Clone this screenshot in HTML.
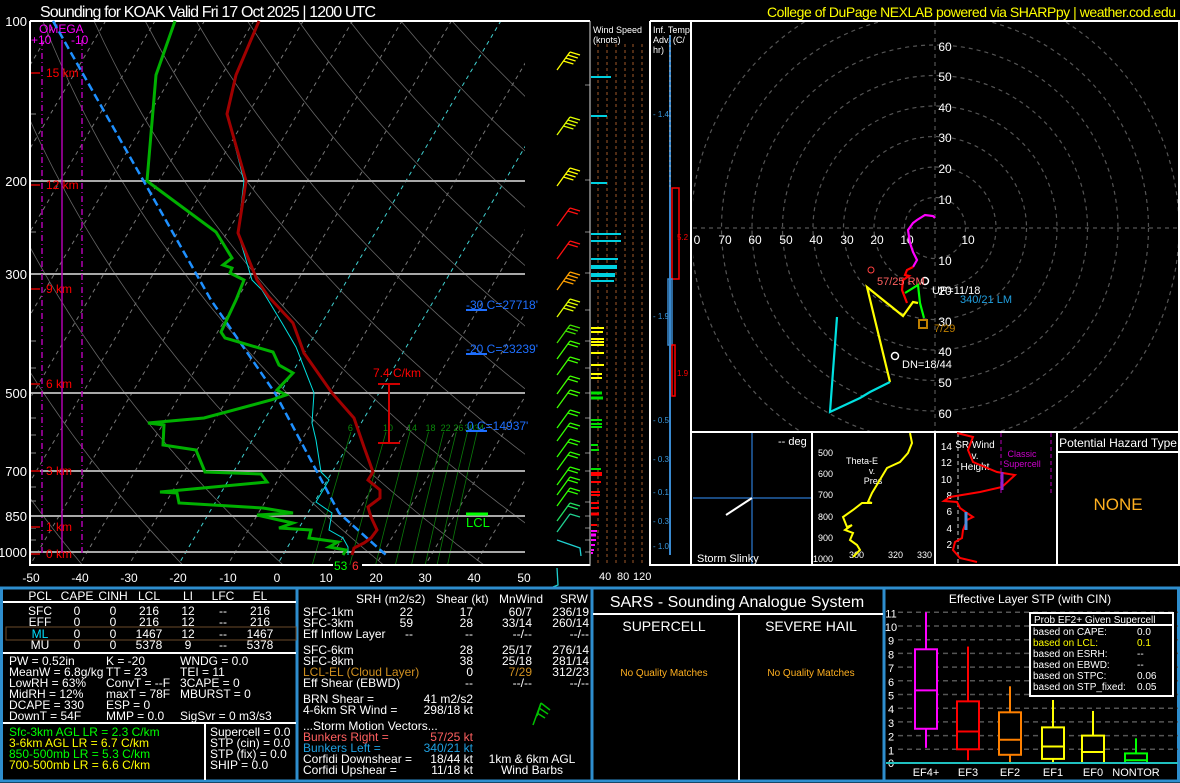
<!DOCTYPE html>
<html><head><meta charset="utf-8"><style>
html,body{margin:0;padding:0;background:#000;width:1180px;height:783px;overflow:hidden}
svg{display:block}
text{font-family:"Liberation Sans",sans-serif}
</style></head><body>
<svg id="s" width="1180" height="783" viewBox="0 0 1180 783" xmlns="http://www.w3.org/2000/svg">
<defs><clipPath id="ck"><rect x="31" y="22" width="494" height="543"/></clipPath>
<clipPath id="ch"><rect x="693" y="22" width="487" height="409"/></clipPath></defs>
<rect width="1180" height="783" fill="#000"/>
<text x="40" y="17" fill="#fff" font-size="16" textLength="336">Sounding for KOAK Valid  Fri 17 Oct 2025 | 1200 UTC</text>
<text x="1176" y="17" fill="#ffff00" font-size="14" text-anchor="end" textLength="409">College of DuPage NEXLAB powered via SHARPpy | weather.cod.edu</text>

<g id="grid" clip-path="url(#ck)"></g>
<!-- pressure lines -->
<g stroke="#a8a8a8" stroke-width="2">
<line x1="31" y1="181" x2="525" y2="181"/><line x1="31" y1="274" x2="525" y2="274"/><line x1="31" y1="393" x2="525" y2="393"/><line x1="31" y1="471" x2="525" y2="471"/><line x1="31" y1="516" x2="525" y2="516"/><line x1="31" y1="552" x2="525" y2="552"/></g>
<g stroke="#888" stroke-width="1"><line x1="31" y1="114" x2="36" y2="114"/><line x1="31" y1="232" x2="36" y2="232"/><line x1="31" y1="341" x2="36" y2="341"/><line x1="31" y1="368" x2="36" y2="368"/><line x1="31" y1="418" x2="36" y2="418"/><line x1="31" y1="435" x2="36" y2="435"/><line x1="31" y1="453" x2="36" y2="453"/><line x1="31" y1="487" x2="36" y2="487"/><line x1="31" y1="501" x2="36" y2="501"/><line x1="31" y1="528" x2="36" y2="528"/><line x1="31" y1="540" x2="36" y2="540"/></g>
<!-- omega -->
<g stroke="#b000b0" stroke-width="1.5"><line x1="62" y1="40" x2="62" y2="553"/>
<line x1="42" y1="40" x2="42" y2="553" stroke-dasharray="6,3,1,3"/><line x1="82" y1="40" x2="82" y2="553" stroke-dasharray="6,3,1,3"/></g>
<text x="39" y="33" fill="#ff00ff" font-size="12">OMEGA</text>
<text x="31" y="44" fill="#ff00ff" font-size="12">+10</text><text x="71" y="44" fill="#ff00ff" font-size="12">-10</text>
<!-- box -->
<g stroke="#fff" stroke-width="2" fill="none"><line x1="30" y1="21" x2="590" y2="21"/><line x1="30" y1="21" x2="30" y2="566"/><line x1="30" y1="565" x2="333" y2="565"/><line x1="362" y1="565" x2="590" y2="565"/></g>
<g fill="#fff" font-size="13" text-anchor="end"><text x="27" y="26">100</text><text x="27" y="186">200</text><text x="27" y="279">300</text><text x="27" y="398">500</text><text x="27" y="476">700</text><text x="27" y="521">850</text><text x="27" y="557">1000</text></g>
<g fill="#fff" font-size="12" text-anchor="middle"><text x="31" y="582">-50</text><text x="80" y="582">-40</text><text x="129" y="582">-30</text><text x="178" y="582">-20</text><text x="228" y="582">-10</text><text x="277" y="582">0</text><text x="326" y="582">10</text><text x="376" y="582">20</text><text x="425" y="582">30</text><text x="474" y="582">40</text><text x="524" y="582">50</text></g>
<text x="334" y="570" fill="#00ff00" font-size="12">53</text><text x="352" y="570" fill="#ff3030" font-size="12">6</text>
<!-- km -->
<g stroke="#a00000" stroke-width="2"><line x1="31" y1="73" x2="40" y2="73"/><line x1="31" y1="185" x2="40" y2="185"/><line x1="31" y1="289" x2="40" y2="289"/><line x1="31" y1="384" x2="40" y2="384"/><line x1="31" y1="471" x2="40" y2="471"/><line x1="31" y1="527" x2="40" y2="527"/><line x1="31" y1="554" x2="40" y2="554"/></g>
<g fill="#ff0000" font-size="12"><text x="46" y="77">15 km</text><text x="46" y="189">12 km</text><text x="46" y="293">9 km</text><text x="46" y="388">6 km</text><text x="46" y="475">3 km</text><text x="46" y="531">1 km</text><text x="46" y="558">0 km</text></g>
<!-- traces -->
<polyline fill="none" stroke="#1e90ff" stroke-width="2.5" stroke-dasharray="8,4" points="53,21 211,300 275,393 339,513 386,555"/>
<polyline fill="none" stroke="#00e0e0" stroke-width="1" points="259,21 236,75 227,114 244,181 238,233 252,280 262,290 282,323 296,347 314,393 312,423 316,440 321,472 329,480 316,502 332,513 329,530 343,538 348,547 348,555"/>
<polyline fill="none" stroke="#a00000" stroke-width="3" points="259,21 236,75 227,114 246,181 238,233 257,280 268,296 293,323 304,353 332,393 354,418 364,447 373,472 368,480 380,490 380,498 368,507 371,517 377,530 371,538 364,543 354,548 352,555"/>
<polyline fill="none" stroke="#00b000" stroke-width="3" points="175,21 156,75 147,181 216,232 232,258 223,265 232,268 230,273 244,280 236,300 221,332 225,338 273,352 279,365 293,373 277,390 286,395 271,400 204,418 148,423 164,425 163,445 196,450 205,472 261,474 267,482 160,492 177,493 179,503 263,508 293,513 257,515 279,520 293,523 279,528 311,530 309,538 338,542 329,547 346,550 343,555"/>
<g fill="#1e6fff" font-size="12"><text x="466" y="309">-30 C=27718'</text><text x="466" y="353">-20 C=23239'</text><text x="467" y="430">0 C=14937'</text></g>
<g stroke="#1e6fff" stroke-width="2"><line x1="466" y1="310" x2="487" y2="310"/><line x1="466" y1="354" x2="487" y2="354"/><line x1="466" y1="431" x2="487" y2="431"/></g>
<line x1="466" y1="514" x2="488" y2="514" stroke="#00ff00" stroke-width="3"/><text x="466" y="527" fill="#00ff00" font-size="13">LCL</text>
<text x="373" y="377" fill="#ff0000" font-size="12">7.4 C/km</text>
<g stroke="#d00000" stroke-width="2"><line x1="389" y1="384" x2="389" y2="443"/><line x1="378" y1="384" x2="400" y2="384"/><line x1="378" y1="443" x2="400" y2="443"/></g>
<g id="barbs"></g>
<g stroke="#888" stroke-width="1"><line x1="585" y1="85" x2="590" y2="85"/><line x1="585" y1="180" x2="590" y2="180"/><line x1="585" y1="232" x2="590" y2="232"/><line x1="585" y1="273" x2="590" y2="273"/><line x1="585" y1="310" x2="590" y2="310"/><line x1="585" y1="341" x2="590" y2="341"/><line x1="585" y1="368" x2="590" y2="368"/><line x1="585" y1="393" x2="590" y2="393"/><line x1="585" y1="418" x2="590" y2="418"/><line x1="585" y1="453" x2="590" y2="453"/><line x1="585" y1="471" x2="590" y2="471"/><line x1="585" y1="502" x2="590" y2="502"/><line x1="585" y1="516" x2="590" y2="516"/><line x1="585" y1="528" x2="590" y2="528"/><line x1="585" y1="540" x2="590" y2="540"/><line x1="585" y1="552" x2="590" y2="552"/></g>
<!-- wind speed panel -->
<g stroke="#6a3a1a" stroke-width="1.5" stroke-dasharray="3,3"><line x1="598" y1="44" x2="598" y2="565"/><line x1="607" y1="44" x2="607" y2="565"/><line x1="616" y1="44" x2="616" y2="565"/><line x1="625" y1="44" x2="625" y2="565"/><line x1="633" y1="44" x2="633" y2="565"/><line x1="642" y1="44" x2="642" y2="565"/></g>
<line x1="590" y1="21" x2="590" y2="566" stroke="#ddd" stroke-width="1"/>
<line x1="650" y1="21" x2="650" y2="566" stroke="#fff" stroke-width="2"/>
<line x1="691" y1="21" x2="691" y2="566" stroke="#fff" stroke-width="2"/>
<line x1="650" y1="21" x2="1180" y2="21" stroke="#fff" stroke-width="2"/>
<text x="593" y="33" fill="#fff" font-size="9">Wind Speed</text><text x="593" y="43" fill="#fff" font-size="9">(knots)</text>
<text x="653" y="33" fill="#fff" font-size="9">Inf. Temp.</text><text x="653" y="43" fill="#fff" font-size="9">Adv. (C/</text><text x="653" y="53" fill="#fff" font-size="9">hr)</text>
<g id="ws"></g>
<text x="599" y="580" fill="#fff" font-size="11">40</text><text x="617" y="580" fill="#fff" font-size="11">80</text><text x="633" y="580" fill="#fff" font-size="11">120</text>
<!-- temp adv -->
<line x1="670" y1="35" x2="670" y2="555" stroke="#3a8ad0" stroke-width="2"/>
<line x1="670" y1="35" x2="670" y2="188" stroke="#aaa" stroke-width="1" stroke-dasharray="2,3"/>
<rect x="672" y="188" width="7" height="91" fill="none" stroke="#ff0000" stroke-width="1.5"/>
<rect x="668" y="279" width="4" height="66" fill="none" stroke="#3a8ad0" stroke-width="1.5"/>
<rect x="672" y="345" width="3" height="51" fill="none" stroke="#ff0000" stroke-width="1.5"/>
<g fill="#3a9ae0" font-size="8"><text x="653" y="117">- 1.4</text><text x="653" y="319">- 1.9</text><text x="653" y="423">- 0.5</text><text x="653" y="462">- 0.3</text><text x="653" y="495">- 0.1</text><text x="653" y="524">- 0.3</text><text x="653" y="549">- 1.0</text></g>
<g fill="#ff0000" font-size="8"><text x="677" y="240">5.2</text><text x="677" y="376">1.9</text></g>
<!-- hodograph -->
<g clip-path="url(#ch)" fill="none" stroke="#555" stroke-width="1.2" stroke-dasharray="4,4">
<circle cx="935" cy="228" r="30.5"/><circle cx="935" cy="228" r="61"/><circle cx="935" cy="228" r="91.5"/><circle cx="935" cy="228" r="122"/><circle cx="935" cy="228" r="152.5"/><circle cx="935" cy="228" r="183"/><circle cx="935" cy="228" r="213.5"/><circle cx="935" cy="228" r="244"/>
<line x1="693" y1="228" x2="1180" y2="228"/><line x1="935" y1="22" x2="935" y2="431"/></g>
<g fill="#fff" font-size="12" text-anchor="middle"><text x="945" y="51">60</text><text x="945" y="81">50</text><text x="945" y="112">40</text><text x="945" y="142">30</text><text x="945" y="173">20</text><text x="945" y="204">10</text><text x="945" y="265">10</text><text x="945" y="295">20</text><text x="945" y="326">30</text><text x="945" y="356">40</text><text x="945" y="387">50</text><text x="945" y="418">60</text>
<text x="697" y="244">0</text><text x="725" y="244">70</text><text x="755" y="244">60</text><text x="786" y="244">50</text><text x="816" y="244">40</text><text x="847" y="244">30</text><text x="877" y="244">20</text><text x="907" y="244">10</text><text x="968" y="244">10</text></g>
<g fill="none" stroke-width="2.2">
<polyline stroke="#ff00ff" points="935,218 933,216 925,215 917,220 913,223 908,230 910,243 913,252 917,260 913,267"/>
<polyline stroke="#ff0000" points="913,267 907,270 905,275 909,276 903,280 902,290 907,303"/>
<polyline stroke="#00ff00" points="905,293 918,285 920,303 924,318"/>
<polyline stroke="#ffff00" points="918,303 913,302 903,316 867,287 890,382"/>
<polyline stroke="#00e0e0" points="890,382 880,387 870,392 860,398 830,412 837,317"/>
</g>
<circle cx="871" cy="270" r="3" fill="none" stroke="#ff4040"/><circle cx="925" cy="281" r="3.5" fill="none" stroke="#fff" stroke-width="1.5"/><circle cx="895" cy="356" r="3.5" fill="none" stroke="#fff" stroke-width="1.5"/>
<rect x="919" y="320" width="8" height="8" fill="none" stroke="#c08000" stroke-width="2"/>
<text x="877" y="285" fill="#ff6060" font-size="11">57/25 RM</text>
<text x="932" y="294" fill="#fff" font-size="11">UP=11/18</text>
<text x="960" y="303" fill="#20a0e0" font-size="11">340/21 LM</text>
<text x="934" y="332" fill="#c08000" font-size="11">7/29</text>
<text x="902" y="368" fill="#fff" font-size="11">DN=18/44</text>
<line x1="1179" y1="21" x2="1179" y2="565" stroke="#fff" stroke-width="2"/>
<!-- lower right panels -->
<g stroke="#fff" stroke-width="2" fill="none"><line x1="691" y1="432" x2="1180" y2="432"/><line x1="812" y1="432" x2="812" y2="565"/><line x1="935" y1="432" x2="935" y2="565"/><line x1="1057" y1="432" x2="1057" y2="565"/><line x1="1057" y1="452" x2="1180" y2="452"/><line x1="650" y1="565" x2="1180" y2="565"/></g>
<g stroke="#1a4a80" stroke-width="2"><line x1="693" y1="498" x2="811" y2="498"/><line x1="752" y1="433" x2="752" y2="564"/></g>
<line x1="752" y1="498" x2="726" y2="515" stroke="#fff" stroke-width="2"/>
<text x="778" y="445" fill="#fff" font-size="11">-- deg</text><text x="697" y="562" fill="#fff" font-size="11">Storm Slinky</text>
<g fill="#fff" font-size="9"><text x="818" y="456">500</text><text x="818" y="477">600</text><text x="818" y="498">700</text><text x="818" y="520">800</text><text x="818" y="541">900</text><text x="813" y="562">1000</text><text x="849" y="558">300</text><text x="888" y="558">320</text><text x="917" y="558">330</text>
<text x="862" y="464" text-anchor="middle">Theta-E</text><text x="872" y="474" text-anchor="middle">v.</text><text x="873" y="484" text-anchor="middle">Pres</text></g>
<polyline fill="none" stroke="#ffff00" stroke-width="2" points="910,433 912,443 908,453 900,462 887,468 878,483 872,493 868,502 872,503 862,503 853,510 843,517 847,527 852,525 845,530 853,533 850,540 857,545 860,550 853,557"/>
<g stroke="#888" stroke-width="1.5" stroke-dasharray="4,3"><line x1="958" y1="433" x2="958" y2="564"/></g>
<g stroke="#7a007a" stroke-width="1.5" stroke-dasharray="4,3"><line x1="1001" y1="433" x2="1001" y2="495"/><line x1="1051" y1="433" x2="1051" y2="495"/></g>
<g fill="#fff" font-size="10" text-anchor="end"><text x="952" y="450">14</text><text x="952" y="466">12</text><text x="952" y="483">10</text><text x="952" y="499">8</text><text x="952" y="515">6</text><text x="952" y="532">4</text><text x="952" y="548">2</text></g>
<g fill="#fff" font-size="10" text-anchor="middle"><text x="975" y="448">SR Wind</text><text x="975" y="459">v.</text><text x="975" y="470">Height</text></g>
<g fill="#cc00cc" font-size="9" text-anchor="middle"><text x="1022" y="457">Classic</text><text x="1022" y="467">Supercell</text></g>
<polyline fill="none" stroke="#ff0000" stroke-width="2" points="957,433 973,437 968,450 973,462 997,472 1015,475 1002,487 980,492 950,497 944,501 957,502 960,508 967,513 973,517 967,520 963,530 962,538 955,542 953,550 960,558 977,562"/>
<line x1="1002" y1="472" x2="1002" y2="490" stroke="#9020d0" stroke-width="3"/>
<line x1="966" y1="512" x2="966" y2="530" stroke="#4a90e0" stroke-width="3"/>
<text x="1118" y="447" fill="#fff" font-size="12" text-anchor="middle">Potential Hazard Type</text>
<text x="1118" y="510" fill="#ffb020" font-size="17" text-anchor="middle">NONE</text>

<!-- bottom panels -->
<g stroke="#2e8ece" stroke-width="3" fill="none"><rect x="1.5" y="588" width="1177" height="193"/><line x1="297" y1="588" x2="297" y2="781"/><line x1="592" y1="588" x2="592" y2="781"/><line x1="884" y1="588" x2="884" y2="781"/></g>
<g stroke="#fff" stroke-width="2"><line x1="3" y1="602" x2="296" y2="602"/><line x1="3" y1="653" x2="296" y2="653"/><line x1="3" y1="723" x2="296" y2="723"/><line x1="205" y1="723" x2="205" y2="780"/>
<line x1="593" y1="614" x2="883" y2="614"/><line x1="739" y1="614" x2="739" y2="780"/></g>
<rect x="6" y="627" width="290" height="13" fill="none" stroke="#6a4a2a" stroke-width="1"/>
<g fill="#fff" font-size="12" text-anchor="middle">
<text x="40" y="600">PCL</text><text x="77" y="600">CAPE</text><text x="113" y="600">CINH</text><text x="149" y="600">LCL</text><text x="188" y="600">LI</text><text x="223" y="600">LFC</text><text x="260" y="600">EL</text>
<text x="40" y="615">SFC</text><text x="77" y="615">0</text><text x="113" y="615">0</text><text x="149" y="615">216</text><text x="188" y="615">12</text><text x="223" y="615">--</text><text x="260" y="615">216</text>
<text x="40" y="626">EFF</text><text x="77" y="626">0</text><text x="113" y="626">0</text><text x="149" y="626">216</text><text x="188" y="626">12</text><text x="223" y="626">--</text><text x="260" y="626">216</text>
<text x="40" y="638" fill="#00e0ff">ML</text><text x="77" y="638">0</text><text x="113" y="638">0</text><text x="149" y="638">1467</text><text x="188" y="638">12</text><text x="223" y="638">--</text><text x="260" y="638">1467</text>
<text x="40" y="649">MU</text><text x="77" y="649">0</text><text x="113" y="649">0</text><text x="149" y="649">5378</text><text x="188" y="649">9</text><text x="223" y="649">--</text><text x="260" y="649">5378</text></g>
<g fill="#fff" font-size="12">
<text x="9" y="665">PW = 0.52in</text><text x="106" y="665">K = -20</text><text x="180" y="665">WNDG = 0.0</text>
<text x="9" y="676">MeanW = 6.8g/kg</text><text x="106" y="676">TT = 23</text><text x="180" y="676">TEI = 11</text>
<text x="9" y="687">LowRH = 63%</text><text x="106" y="687">ConvT = --F</text><text x="180" y="687">3CAPE = 0</text>
<text x="9" y="698">MidRH = 12%</text><text x="106" y="698">maxT = 78F</text><text x="180" y="698">MBURST = 0</text>
<text x="9" y="709">DCAPE = 330</text><text x="106" y="709">ESP = 0</text>
<text x="9" y="720">DownT = 54F</text><text x="106" y="720">MMP = 0.0</text><text x="180" y="720">SigSvr = 0 m3/s3</text>
<text x="9" y="736" fill="#00ff00">Sfc-3km AGL LR = 2.3 C/km</text>
<text x="9" y="747" fill="#ffff00">3-6km AGL LR = 6.7 C/km</text>
<text x="9" y="758" fill="#00ff00">850-500mb LR = 5.3 C/km</text>
<text x="9" y="769" fill="#ffff00">700-500mb LR = 6.6 C/km</text>
<text x="210" y="736">Supercell = 0.0</text><text x="210" y="747">STP (cin) = 0.0</text><text x="210" y="758">STP (fix) = 0.0</text><text x="210" y="769">SHIP = 0.0</text>
<text x="356" y="603">SRH (m2/s2)</text><text x="436" y="603">Shear (kt)</text><text x="499" y="603">MnWind</text><text x="560" y="603">SRW</text>
<text x="303" y="616">SFC-1km</text><text x="303" y="627">SFC-3km</text><text x="303" y="638">Eff Inflow Layer</text>
<text x="303" y="654">SFC-6km</text><text x="303" y="665">SFC-8km</text><text x="303" y="676" fill="#d09020">LCL-EL (Cloud Layer)</text><text x="303" y="687">Eff Shear (EBWD)</text>
<text x="303" y="703">BRN Shear =</text><text x="303" y="714">4-6km SR Wind =</text>
<text x="303" y="730">...Storm Motion Vectors...</text>
<text x="303" y="741" fill="#ff6060">Bunkers Right =</text><text x="303" y="752" fill="#20a0e0">Bunkers Left =</text>
<text x="303" y="763">Corfidi Downshear =</text><text x="303" y="774">Corfidi Upshear =</text></g>
<g fill="#fff" font-size="12" text-anchor="end">
<text x="413" y="616">22</text><text x="473" y="616">17</text><text x="532" y="616">60/7</text><text x="589" y="616">236/19</text>
<text x="413" y="627">59</text><text x="473" y="627">28</text><text x="532" y="627">33/14</text><text x="589" y="627">260/14</text>
<text x="413" y="638">--</text><text x="473" y="638">--</text><text x="532" y="638">--/--</text><text x="589" y="638">--/--</text>
<text x="473" y="654">28</text><text x="532" y="654">25/17</text><text x="589" y="654">276/14</text>
<text x="473" y="665">38</text><text x="532" y="665">25/18</text><text x="589" y="665">281/14</text>
<text x="473" y="676">0</text><text x="532" y="676" fill="#d09020">7/29</text><text x="589" y="676">312/23</text>
<text x="473" y="687">--</text><text x="532" y="687">--/--</text><text x="589" y="687">--/--</text>
<text x="473" y="703">41 m2/s2</text><text x="473" y="714">298/18 kt</text>
<text x="473" y="741" fill="#ff6060">57/25 kt</text><text x="473" y="752" fill="#20a0e0">340/21 kt</text>
<text x="473" y="763">18/44 kt</text><text x="473" y="774">11/18 kt</text></g>
<g fill="#fff" font-size="12" text-anchor="middle"><text x="532" y="763">1km &amp; 6km AGL</text><text x="532" y="774">Wind Barbs</text></g>
<g stroke="#00c000" stroke-width="1.5" fill="none"><line x1="533" y1="725" x2="541" y2="703"/><line x1="541" y1="703" x2="550" y2="710"/><line x1="539" y1="708" x2="548" y2="714"/><line x1="537" y1="713" x2="545" y2="718"/><line x1="541" y1="703" x2="537" y2="716"/></g>
<!-- SARS -->
<text x="737" y="607" fill="#fff" font-size="16" text-anchor="middle">SARS - Sounding Analogue System</text>
<text x="664" y="631" fill="#fff" font-size="14" text-anchor="middle">SUPERCELL</text><text x="811" y="631" fill="#fff" font-size="14" text-anchor="middle">SEVERE HAIL</text>
<text x="664" y="676" fill="#ffb020" font-size="10" text-anchor="middle">No Quality Matches</text><text x="811" y="676" fill="#ffb020" font-size="10" text-anchor="middle">No Quality Matches</text>
<!-- STP -->
<text x="1030" y="603" fill="#fff" font-size="12" text-anchor="middle">Effective Layer STP (with CIN)</text>
<g id="stp"></g>
<line x1="886" y1="763" x2="1178" y2="763" stroke="#20c0c0" stroke-width="2"/>
<g fill="#fff" font-size="11" text-anchor="middle"><text x="926" y="776">EF4+</text><text x="968" y="776">EF3</text><text x="1010" y="776">EF2</text><text x="1053" y="776">EF1</text><text x="1093" y="776">EF0</text><text x="1136" y="776">NONTOR</text></g>
<rect x="1030" y="613" width="143" height="83" fill="#000" stroke="#fff" stroke-width="2"/><line x1="1030" y1="625" x2="1173" y2="625" stroke="#fff" stroke-width="2"/>
<g fill="#fff" font-size="10"><text x="1034" y="623">Prob EF2+ Given Supercell</text>
<text x="1033" y="635">based on CAPE:</text><text x="1137" y="635">0.0</text>
<text x="1033" y="646" fill="#ffff00">based on LCL:</text><text x="1137" y="646" fill="#ffff00">0.1</text>
<text x="1033" y="657">based on ESRH:</text><text x="1137" y="657">--</text>
<text x="1033" y="668">based on EBWD:</text><text x="1137" y="668">--</text>
<text x="1033" y="679">based on STPC:</text><text x="1137" y="679">0.06</text>
<text x="1033" y="690">based on STP_fixed:</text><text x="1137" y="690">0.05</text></g>
</svg>
<script>
var NS='http://www.w3.org/2000/svg';
function el(p,t,a){var e=document.createElementNS(NS,t);for(var k in a)e.setAttribute(k,a[k]);p.appendChild(e);return e;}
function Y(p){return 21+230.6*Math.log(p/100);}
function X(T,p){return 277+4.94*T+0.593*(565-Y(p));}
var g=document.getElementById('grid');
for(var T=-160;T<=50;T+=10){var c=(T==-20||T==0)?'#40d0d0':'#777';
el(g,'line',{x1:X(T,1070),y1:Y(1070),x2:X(T,100),y2:Y(100),stroke:c,'stroke-width':1,'stroke-dasharray':'4,4'});}
for(var th=230;th<=470;th+=20){var pts=[];for(var p=1070;p>=100;p-=10){var t=th*Math.pow(p/1000,0.286)-273.15;pts.push(X(t,p).toFixed(1)+','+Y(p).toFixed(1));}
el(g,'polyline',{points:pts.join(' '),fill:'none',stroke:'#666','stroke-width':0.8});}
var ws=[6,10,14,18,22,26,30,34];
ws.forEach(function(w){var pts=[];[594,700,800,900,1000,1070].forEach(function(p){var e=w*p/(622+w),l=Math.log(e/6.112),td=243.5*l/(17.67-l);pts.push(X(td,p).toFixed(1)+','+Y(p).toFixed(1));});
el(g,'polyline',{points:pts.join(' '),fill:'none',stroke:'#0a7a0a','stroke-width':0.8});
var e=w*594/(622+w),l=Math.log(e/6.112),td=243.5*l/(17.67-l);var tx=el(g,'text',{x:X(td,594)-3,y:Y(594)-1,fill:'#0a8a0a','font-size':9});tx.textContent=w;});
// barbs
var b=document.getElementById('barbs');
var bl=[[60,'#ffff00',4],[125,'#e0ff00',4],[176,'#ffff00',4],[216,'#ff1010',2],[249,'#ff1010',2],[280,'#ffa000',4],[307,'#e0ff00',4],[333,'#40e000',3],[349,'#40ff00',2],[365,'#40ff00',2],[384,'#40ff00',2],[398,'#40ff00',2],[418,'#30ff00',2],[431,'#30ff00',2],[447,'#30ff00',2],[460,'#30ff00',2],[475,'#30ff00',2],[485,'#30ff00',2],[496,'#30ff00',2],[511,'#20e060',2],[522,'#20d090',1]];
bl.forEach(function(r){var y=r[0],c=r[1],n=r[2];var gg=el(b,'g',{stroke:c,'stroke-width':1.3,fill:'none'});
el(gg,'line',{x1:557,y1:y+10,x2:570,y2:y-8});
for(var i=0;i<n;i++){var sx=570-i*2.2,sy=y-8+i*3;el(gg,'line',{x1:sx,y1:sy,x2:sx+10,y2:sy+3});}});
var cg=el(b,'g',{stroke:'#20d0d0','stroke-width':1.3,fill:'none'});
el(cg,'polyline',{points:'557,540 580,548 581,556'});el(cg,'polyline',{points:'557,568 558,585 553,587'});
// wind speed bars
var wsb=document.getElementById('ws');
var bars=[[77,611,'#00d0e0',2],[116,607,'#00d0e0',2],[183,607,'#00d0e0',2],[234,621,'#00d0e0',2],[241,621,'#00d0e0',2],[259,618,'#00d0e0',2],[267,617,'#00d0e0',4],[275,615,'#00d0e0',4],[281,614,'#00d0e0',2],
[328,604,'#ffff00',2],[332,603,'#ffff00',2],[339,604,'#ffff00',2],[342,604,'#ffff00',2],[345,604,'#ffff00',2],[353,604,'#ffff00',2],[365,604,'#ffff00',2],[374,602,'#ffff00',2],[378,602,'#ffff00',2],
[393,602,'#00e000',3],[398,603,'#00e000',3],[420,602,'#00e000',2],[424,602,'#00e000',2],[427,602,'#00e000',2],[445,598,'#00e000',2],[450,599,'#00e000',2],
[469,601,'#00e000',2],[474,602,'#ff0000',4],[482,601,'#ff0000',2],[492,600,'#ff0000',2],[495,600,'#ff0000',2],[503,599,'#ff0000',2],[508,599,'#ff0000',2],[514,599,'#ff0000',3],[525,597,'#ff0000',2],
[531,597,'#ff00ff',2],[535,596,'#ff00ff',3],[540,596,'#ff00ff',2],[545,595,'#ff00ff',2],[550,594,'#ff00ff',2],[553,593,'#ff00ff',2]];
bars.forEach(function(r){el(wsb,'line',{x1:591,y1:r[0],x2:r[1],y2:r[0],stroke:r[2],'stroke-width':r[3]});});
// stp
var s=document.getElementById('stp');function sy(v){return 763-v*13.7;}
for(var i=1;i<=11;i++){el(s,'line',{x1:898,y1:sy(i),x2:1178,y2:sy(i),stroke:'#555','stroke-width':1.5,'stroke-dasharray':'5,4'});var t=el(s,'text',{x:891,y:sy(i)+5,fill:'#fff','font-size':11,'text-anchor':'middle'});t.textContent=i;}
var t0=el(s,'text',{x:891,y:767,fill:'#fff','font-size':11,'text-anchor':'middle'});t0.textContent='0';
var bx=[[926,'#ff00ff',1.1,11,2.5,8.3,5.3],[968,'#ff0000',0.2,8.5,1,4.5,2.3],[1010,'#ff8000',0,5.6,0.6,3.7,1.7],[1053,'#ffff00',0,4.6,0.3,2.6,1.2],[1093,'#ffff00',0,3.8,0,2,0.8],[1136,'#00ff00',0,1.8,0,0.7,0.2]];
bx.forEach(function(r){var x=r[0],c=r[1];el(s,'line',{x1:x,y1:sy(r[2]),x2:x,y2:sy(r[3]),stroke:c,'stroke-width':2});
el(s,'rect',{x:x-11,y:sy(r[5]),width:22,height:sy(r[4])-sy(r[5]),fill:'#000',stroke:c,'stroke-width':2});
el(s,'line',{x1:x-11,y1:sy(r[6]),x2:x+11,y2:sy(r[6]),stroke:c,'stroke-width':2});});
</script>
</body></html>
